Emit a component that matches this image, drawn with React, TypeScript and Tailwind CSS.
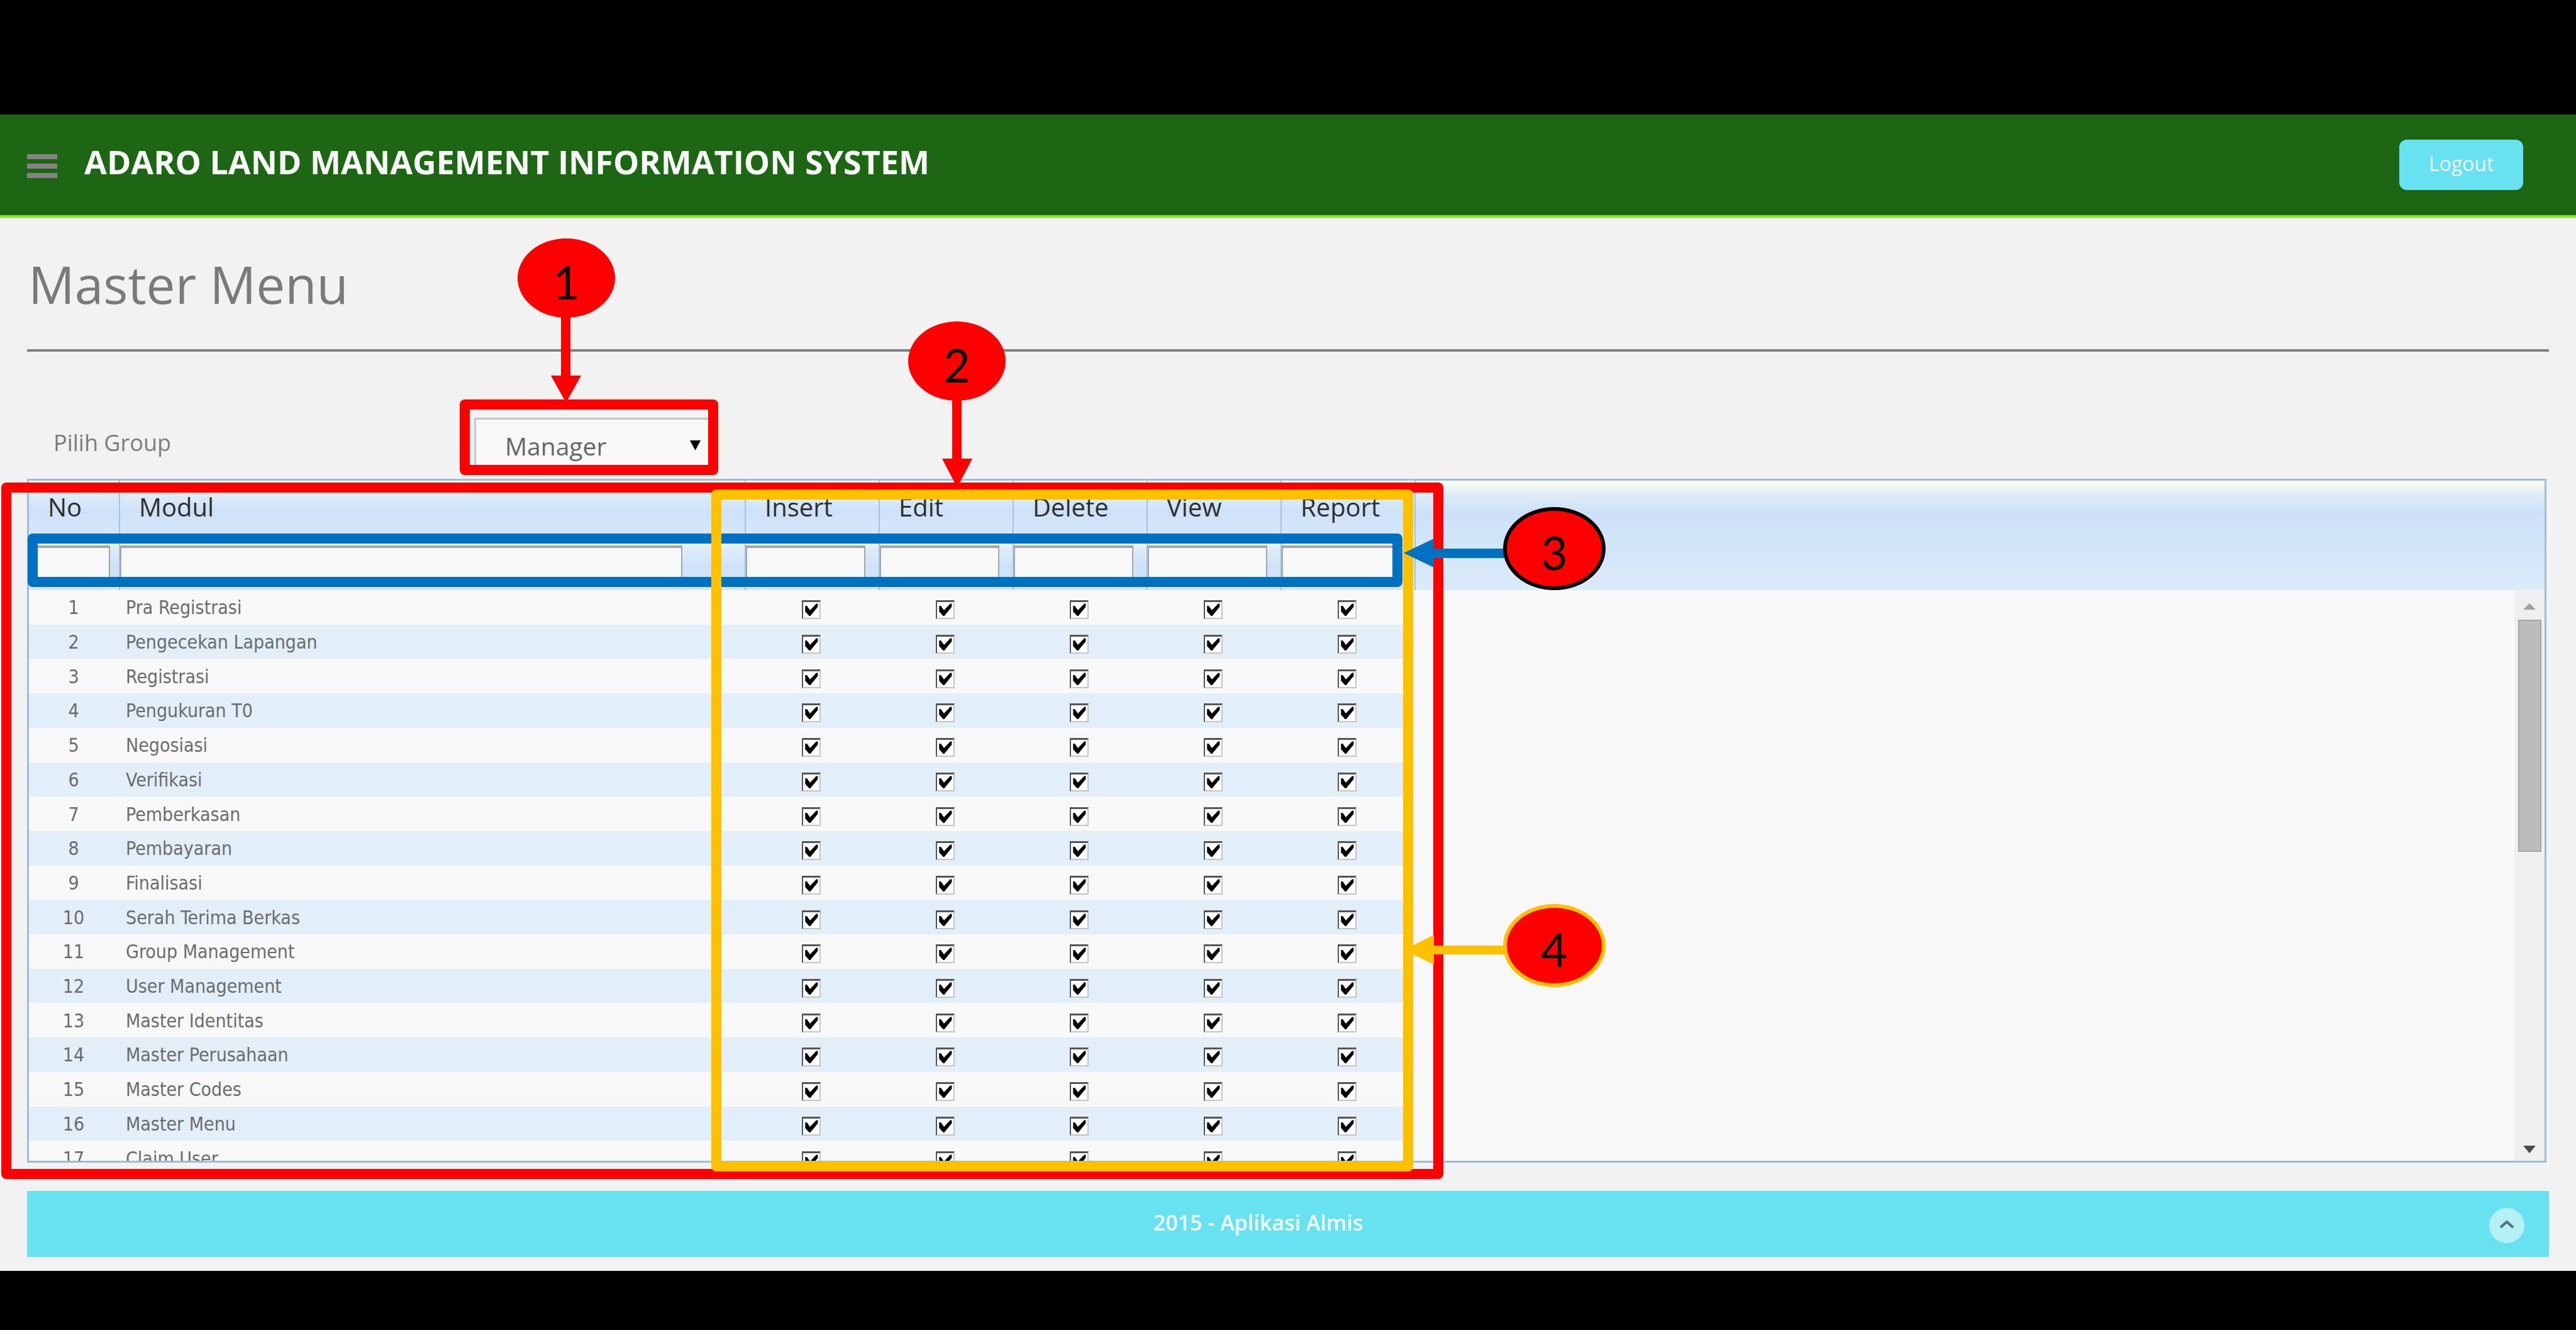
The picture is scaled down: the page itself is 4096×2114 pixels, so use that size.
import { useState } from "react";

const modules = [
  "Pra Registrasi",
  "Pengecekan Lapangan",
  "Registrasi",
  "Pengukuran T0",
  "Negosiasi",
  "Verifikasi",
  "Pemberkasan",
  "Pembayaran",
  "Finalisasi",
  "Serah Terima Berkas",
  "Group Management",
  "User Management",
  "Master Identitas",
  "Master Perusahaan",
  "Master Codes",
  "Master Menu",
  "Claim User",
];

const rights = ["Insert", "Edit", "Delete", "View", "Report"];
const columns = ["No", "Modul", ...rights];

const cellGradient =
  "bg-[linear-gradient(to_bottom,#ffffff_0%,#deedf6_24%,#cde1f9_57%,#d6e8f8_100%)]";

function RightCheckbox({ label }: { label: string }) {
  const [checked, setChecked] = useState(true);
  return (
    <span className="mx-auto mt-2 grid size-[30px] place-items-center">
      <input
        type="checkbox"
        aria-label={label}
        checked={checked}
        onChange={() => setChecked(!checked)}
        className="col-start-1 row-start-1 size-[30px] appearance-none border-2 border-t-3 border-t-[#555555] border-r-[#c4c4c4] border-b-[#c4c4c4] border-l-[#555555] bg-white"
      />
      {checked && (
        <svg viewBox="0 0 30 30" className="pointer-events-none col-start-1 row-start-1 size-[30px]">
          <path d="M5.300 9 H8 L13 16 L23 5.500 H25.400 V10.500 L13.500 25 H11.700 L5.300 18 Z" fill="#000" />
        </svg>
      )}
    </span>
  );
}

function TopBar() {
  return (
    <header className="flex h-[164px] items-center border-b-4 border-[#80ea1c] bg-[#1c6614] pr-[84px] pl-[43px]">
      <button type="button" aria-label="Toggle menu" className="flex w-12 flex-col gap-[7px] pt-1">
        <span className="h-2 w-full bg-[#868286]" />
        <span className="h-2 w-full bg-[#868286]" />
        <span className="h-2 w-full bg-[#868286]" />
      </button>
      <div className="ml-[43px] pb-2.5 text-[52px] leading-none font-bold text-[#f8f8f8]">
        ADARO LAND MANAGEMENT INFORMATION SYSTEM
      </div>
      <button
        type="button"
        className="ml-auto h-20 w-[197px] rounded-xl bg-[#68e1f0] pb-1 text-[32px] font-medium text-[#f0f0f0]"
      >
        Logout
      </button>
    </header>
  );
}

function GroupPicker() {
  return (
    <div className="mt-[105px] flex h-[88px] items-center">
      <label htmlFor="group" className="w-[711px] pb-2 pl-[42px] text-[36px] text-[#7d7d7d]">
        Pilih Group
      </label>
      <div className="relative h-full w-[380px]">
        <select
          id="group"
          defaultValue="Manager"
          className="h-full w-full appearance-none border-t-3 border-l-3 border-[#c6c6c6] bg-[#f8f8f8] pl-[46px] text-[39px] text-[#666666]"
        >
          <option>Manager</option>
        </select>
        <svg
          viewBox="0 0 17 16"
          className="pointer-events-none absolute top-9 right-5 h-4 w-[17px]"
        >
          <path d="M0 0 H17 L8.500 16 Z" fill="#000" />
        </svg>
      </div>
    </div>
  );
}

function ScrollBar() {
  return (
    <div className="absolute right-0 bottom-0 flex h-[906px] w-12 flex-col items-center bg-[#efefef]">
      <svg viewBox="0 0 20 10" className="mt-5 h-2.5 w-5">
        <path d="M10 0 L20 10 H0 Z" fill="#9f9f9f" />
      </svg>
      <div className="mt-4 h-[369px] w-[37px] border-2 border-[#a4a4a4] bg-[#bcbcbc]" />
      <svg viewBox="0 0 20 12" className="mt-auto mb-3 h-3 w-5">
        <path d="M0 0 H20 L10 12 Z" fill="#4a4a4a" />
      </svg>
    </div>
  );
}

function ModuleTable() {
  return (
    <div className="relative mt-[9px] mr-1 h-[1087px] overflow-hidden border-3 border-[#9dbcd8] bg-[#f8f8f8]">
      <table className="h-[1104px] w-full table-fixed border-collapse">
        <colgroup>
          <col className="w-[144px]" />
          <col className="w-[995px]" />
          {rights.map((r) => (
            <col key={r} className="w-[213px]" />
          ))}
          <col />
        </colgroup>
        <thead>
          <tr className="h-[87px]">
            {columns.map((c) => (
              <th
                key={c}
                className={`border-r-2 border-[#a6c2e0] p-0 pb-1 pl-[30px] text-left text-[40px] leading-[48px] font-normal text-[#2e2e2e] ${cellGradient}`}
              >
                {c}
              </th>
            ))}
            <th
              rowSpan={2}
              className="bg-[linear-gradient(to_bottom,#fdfdf6_0%,#ddecf5_14%,#cde0f9_29%,#d1e5f8_55%,#dcebfa_100%)]"
            />
          </tr>
          <tr className="h-[87px]">
            {columns.map((c) => (
              <td key={c} className={`border-r-2 border-[#a6c2e0] p-0 pt-4 align-top ${cellGradient}`}>
                <input
                  type="text"
                  aria-label={`Filter ${c}`}
                  className="block h-[58px] w-[90%] border-2 border-t-4 border-[#a5a5a5] bg-[#f8f8f8] text-[32px]"
                />
              </td>
            ))}
          </tr>
        </thead>
        <tbody className="font-['DejaVu_Sans_Condensed','DejaVu_Sans',sans-serif] text-[30px] leading-9 text-[#6c6c6c]">
          {modules.map((m, i) => {
            const bg = i % 2 ? "bg-[#e2eef8]" : "";
            return (
              <tr key={m}>
                <td className={`p-0 pt-0.5 pr-0.5 text-center ${bg}`}>{i + 1}</td>
                <td className={`p-0 pt-0.5 pl-2.5 ${bg}`}>{m}</td>
                {rights.map((r) => (
                  <td key={r} className={`p-0 pr-1 ${bg}`}>
                    <RightCheckbox label={`${r} ${m}`} />
                  </td>
                ))}
                <td className="p-0" />
              </tr>
            );
          })}
        </tbody>
      </table>
      <ScrollBar />
    </div>
  );
}

function Footer() {
  return (
    <footer className="mt-[45px] flex h-[105px] items-center bg-[#68e1f0] pr-[39px]">
      <p className="flex-1 pb-1 text-center text-[34px] font-semibold text-[#f4fbfb]">
        2015 - Aplikasi Almis
      </p>
      <button
        type="button"
        aria-label="Back to top"
        className="mt-1 grid size-14 place-items-center rounded-full bg-[#b5f0f7]"
      >
        <svg viewBox="0 0 24 14" className="mb-1 h-3.5 w-6" fill="none" stroke="#56707c" strokeWidth="4">
          <path d="M2 12 L12 3 L22 12" />
        </svg>
      </button>
    </footer>
  );
}

function Marker({ n, place }: { n: number; place: string }) {
  return (
    <div
      className={`absolute grid place-items-center rounded-[50%] bg-[#ff0000] pt-3 font-['Lato',sans-serif] text-[73px] leading-none text-black ${place}`}
    >
      {n}
    </div>
  );
}

function Callouts() {
  return (
    <div className="pointer-events-none absolute inset-0">
      <div className="absolute top-[767px] left-[2px] h-[1107px] w-[2293px] rounded-lg border-16 border-[#ff0000]" />
      <div className="absolute top-[848px] left-[44px] h-[85px] w-[2186px] rounded-lg border-16 border-[#0070c0]" />
      <div className="absolute top-[778px] left-[1131px] h-[1084px] w-[1116px] rounded-lg border-16 border-[#ffc000]" />
      <div className="absolute top-[635px] left-[731px] h-[120px] w-[411px] rounded-lg border-16 border-[#ff0000]" />

      <svg viewBox="0 0 48 136" className="absolute top-[504px] left-[876px] h-[136px] w-12">
        <path d="M16 0 H31 V93 H48 L24 136 L0 93 H16 Z" fill="#ff0000" />
      </svg>
      <svg viewBox="0 0 48 140" className="absolute top-[635px] left-[1498px] h-[140px] w-12">
        <path d="M16 0 H31 V94 H48 L24 140 L0 94 H16 Z" fill="#ff0000" />
      </svg>
      <svg viewBox="0 0 162 48" className="absolute top-[856px] left-[2232px] h-12 w-[162px]">
        <path d="M0 23 L48 0 V16 H162 V31 H48 V46 Z" fill="#0070c0" />
      </svg>
      <svg viewBox="0 0 162 48" className="absolute top-[1486px] left-[2232px] h-12 w-[162px]">
        <path d="M0 24 L48 0 V17 H162 V31 H48 V47 Z" fill="#ffc000" />
      </svg>

      <Marker n={1} place="top-[379px] left-[823px] h-[126px] w-[155px]" />
      <Marker n={2} place="top-[511px] left-[1444px] h-[126px] w-[155px]" />
      <Marker n={3} place="top-[806px] left-[2390px] h-[132px] w-[163px] border-6 border-black" />
      <Marker n={4} place="top-[1437px] left-[2390px] h-[132px] w-[163px] border-6 border-[#ffc000]" />
    </div>
  );
}

export default function App() {
  return (
    <div className="relative min-h-screen bg-black pt-[182px] pb-[94px] font-['Open_Sans','Noto_Sans',sans-serif]">
      <div className="bg-[#f2f2f2]">
        <TopBar />
        <main className="px-[43px] pt-[55px] pb-[22px]">
          <h1 className="pl-0.5 text-[82px] leading-[100px] text-[#7a7a7a]">Master Menu</h1>
          <hr className="mt-[54px] border-t-4 border-[#808080]" />
          <GroupPicker />
          <ModuleTable />
          <Footer />
        </main>
      </div>
      <Callouts />
    </div>
  );
}
